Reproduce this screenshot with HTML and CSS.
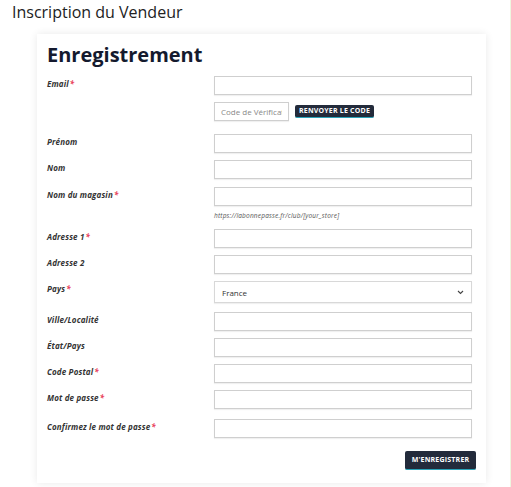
FILE: index.html
```html
<!DOCTYPE html>
<html lang="fr">
<head>
<meta charset="utf-8">
<title>Inscription du Vendeur</title>
<link rel="stylesheet" href="styles.css">
</head>
<body>
<div class="page">
  <h1 class="page-title">Inscription du Vendeur</h1>
  <div class="card">
    <h2 class="card-title">Enregistrement</h2>
    <form class="form">
      <div class="row r-email">
        <label class="lbl">Email<span class="req">*</span></label>
        <div class="ctl">
          <input class="inp" type="text">
          <div class="code-line">
            <input class="inp code" type="text" placeholder="Code de Vérification">
            <button type="button" class="btn small">RENVOYER LE CODE</button>
          </div>
        </div>
      </div>
      <div class="row">
        <label class="lbl">Prénom</label>
        <div class="ctl"><input class="inp" type="text"></div>
      </div>
      <div class="row r-nom">
        <label class="lbl">Nom</label>
        <div class="ctl"><input class="inp" type="text"></div>
      </div>
      <div class="row">
        <label class="lbl">Nom du magasin<span class="req">*</span></label>
        <div class="ctl">
          <input class="inp" type="text">
          <div class="hint">https://labonnepasse.fr/club/[your_store]</div>
        </div>
      </div>
      <div class="row">
        <label class="lbl">Adresse 1<span class="req">*</span></label>
        <div class="ctl"><input class="inp" type="text"></div>
      </div>
      <div class="row">
        <label class="lbl">Adresse 2</label>
        <div class="ctl"><input class="inp" type="text"></div>
      </div>
      <div class="row r-pays">
        <label class="lbl">Pays<span class="req">*</span></label>
        <div class="ctl">
          <div class="select">
            <span>France</span>
            <svg class="chev" width="7" height="5" viewBox="0 0 7 5"><path d="M1 1 L3.5 3.5 L6 1" fill="none" stroke="#444" stroke-width="1.1"/></svg>
          </div>
        </div>
      </div>
      <div class="row">
        <label class="lbl">Ville/Localité</label>
        <div class="ctl"><input class="inp" type="text"></div>
      </div>
      <div class="row">
        <label class="lbl">État/Pays</label>
        <div class="ctl"><input class="inp" type="text"></div>
      </div>
      <div class="row">
        <label class="lbl">Code Postal<span class="req">*</span></label>
        <div class="ctl"><input class="inp" type="text"></div>
      </div>
      <div class="row r-mdp">
        <label class="lbl">Mot de passe<span class="req">*</span></label>
        <div class="ctl"><input class="inp" type="text"></div>
      </div>
      <div class="row">
        <label class="lbl">Confirmez le mot de passe<span class="req">*</span></label>
        <div class="ctl"><input class="inp" type="text"></div>
      </div>
      <div class="actions">
        <button type="button" class="btn big">M'ENREGISTRER</button>
      </div>
    </form>
  </div>
</div>
</body>
</html>
```

FILE: styles.css
```css
html, body {
  margin: 0;
  padding: 0;
  background: #ffffff;
}
body {
  font-family: "Open Sans", "Liberation Sans", sans-serif;
  color: #222;
  width: 511px;
  height: 487px;
  overflow: hidden;
  box-sizing: border-box;
  border-right: 1px solid #eef7e0;
}
.page {
  padding: 0 0 0 37px;
}
.page-title {
  margin: 0 0 0 -25px;
  padding-top: 2px;
  font-size: 16px;
  font-weight: 400;
  color: #222;
  line-height: 20px;
  height: 32px;
}
.card {
  width: 449px;
  height: 449px;
  box-sizing: border-box;
  background: #fff;
  box-shadow: 0 0 8px rgba(0, 0, 0, 0.09);
  padding: 9px 14px 0 10px;
}
.card-title {
  margin: 0;
  font-size: 20px;
  font-weight: 700;
  color: #141a2e;
  line-height: 24px;
  height: 33px;
}
.form {
  display: flex;
  flex-direction: column;
}
.row {
  display: grid;
  grid-template-columns: 167px 258px;
  margin-bottom: 7px;
}
.r-email { margin-bottom: 13px; }
.r-nom { margin-bottom: 8px; }
.r-pays { margin-bottom: 9px; }
.r-mdp { margin-bottom: 10px; }
.lbl {
  font-size: 8px;
  font-weight: 700;
  font-style: italic;
  color: #333;
  padding-top: 3px;
  line-height: 10px;
  letter-spacing: 0.15px;
}
.req {
  color: #e8415a;
  margin-left: 1px;
}
.ctl {
  display: flex;
  flex-direction: column;
}
.inp {
  box-sizing: border-box;
  width: 258px;
  height: 19px;
  margin: 0;
  border: 1px solid #cfcfcf;
  box-shadow: 0 1px 1px rgba(0, 0, 0, 0.06);
  background: #fff;
  font-family: inherit;
  font-size: 8px;
  padding: 0 6px;
  outline: none;
}
.code-line {
  display: flex;
  align-items: center;
  gap: 6px;
  margin-top: 7px;
}
.inp.code {
  width: 75px;
  color: #777;
}
.inp.code::placeholder {
  color: #888;
}
.btn {
  background: #232b3b;
  color: #fff;
  border: none;
  border-bottom: 1px solid #2aa3b8;
  border-radius: 2px;
  font-family: inherit;
  font-weight: 700;
  letter-spacing: 0.2px;
  padding: 0;
  cursor: pointer;
}
.btn.small {
  width: 79px;
  height: 13px;
  font-size: 7px;
  line-height: 12px;
}
.btn.big {
  width: 71px;
  height: 19px;
  font-size: 7px;
  line-height: 18px;
}
.hint {
  font-size: 6.5px;
  font-style: italic;
  color: #555;
  margin-top: 4px;
  height: 12px;
  line-height: 12px;
  letter-spacing: 0.2px;
}
.select {
  box-sizing: border-box;
  width: 258px;
  height: 22px;
  border: 1px solid #d8d8d8;
  box-shadow: 0 1px 1px rgba(0, 0, 0, 0.06);
  display: flex;
  align-items: center;
  justify-content: space-between;
  padding: 0 7px 0 7px;
  font-size: 8px;
  color: #333;
}
.chev { display: block; }
.actions {
  display: flex;
  justify-content: flex-end;
  margin-top: 6px;
  margin-right: -4px;
}
```
